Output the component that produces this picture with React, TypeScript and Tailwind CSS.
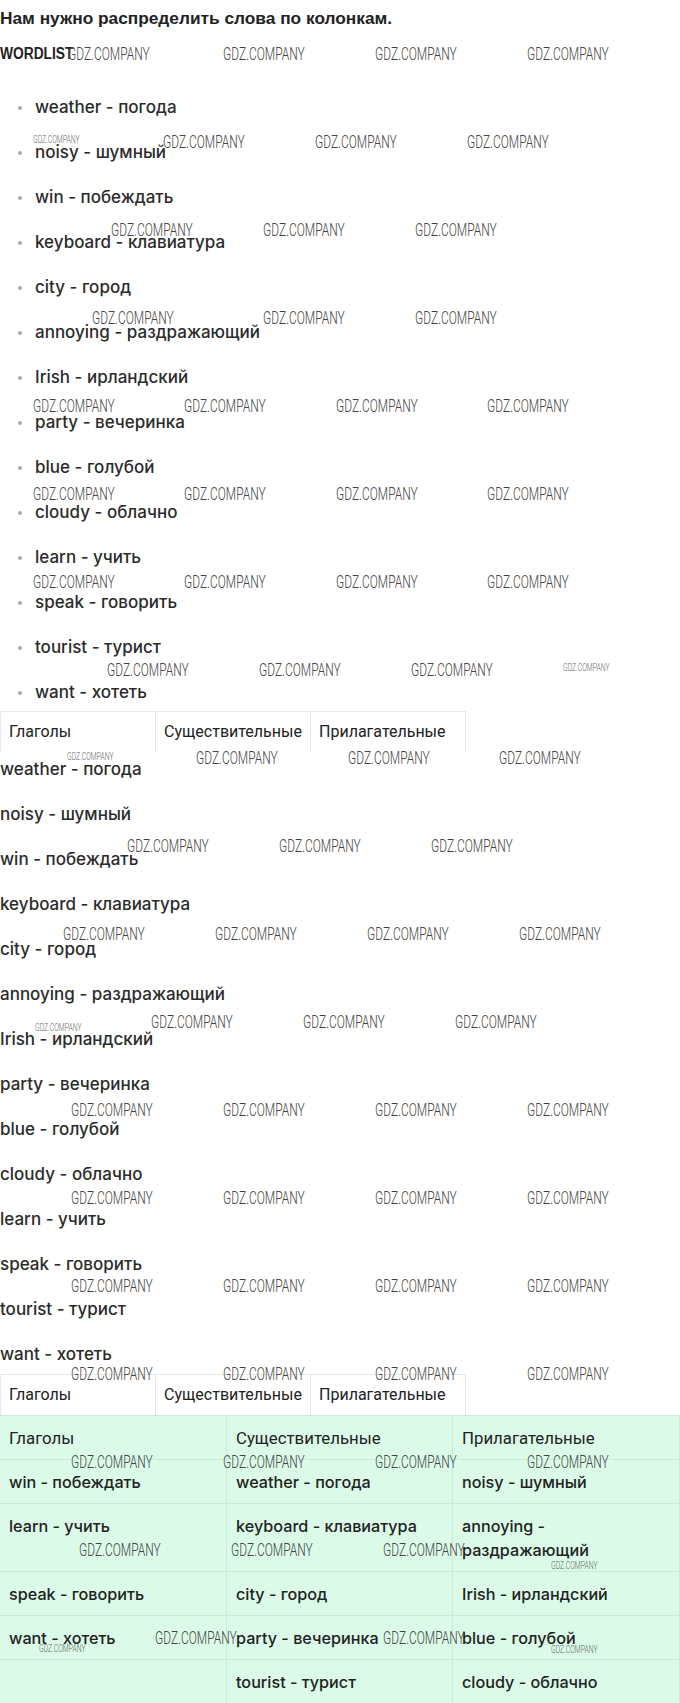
import React from 'react';

const words = [
  'weather - погода',
  'noisy - шумный',
  'win - побеждать',
  'keyboard - клавиатура',
  'city - город',
  'annoying - раздражающий',
  'Irish - ирландский',
  'party - вечеринка',
  'blue - голубой',
  'cloudy - облачно',
  'learn - учить',
  'speak - говорить',
  'tourist - турист',
  'want - хотеть',
];

const heads = ['Глаголы', 'Существительные', 'Прилагательные'];

const rows = [
  ['win - побеждать', 'weather - погода', 'noisy - шумный'],
  ['learn - учить', 'keyboard - клавиатура', 'annoying - раздражающий'],
  ['speak - говорить', 'city - город', 'Irish - ирландский'],
  ['want - хотеть', 'party - вечеринка', 'blue - голубой'],
  ['', 'tourist - турист', 'cloudy - облачно'],
];

// watermark grid: [row centre y, x positions], small ones separately
const markRows: [number, number[]][] = [
  [54, [68, 223, 375, 527]],
  [142, [163, 315, 467]],
  [230, [111, 263, 415]],
  [318, [92, 263, 415]],
  [406, [33, 184, 336, 487]],
  [494, [33, 184, 336, 487]],
  [582, [33, 184, 336, 487]],
  [670, [107, 259, 411]],
  [758, [196, 348, 499]],
  [846, [127, 279, 431]],
  [934, [63, 215, 367, 519]],
  [1022, [151, 303, 455]],
  [1110, [71, 223, 375, 527]],
  [1198, [71, 223, 375, 527]],
  [1286, [71, 223, 375, 527]],
  [1374, [71, 223, 375, 527]],
  [1462, [71, 223, 375, 527]],
  [1550, [79, 231, 383]],
  [1638, [155, 383]],
];

const smallMarks: [number, number][] = [
  [33, 139],
  [563, 667],
  [67, 756],
  [35, 1027],
  [551, 1565],
  [39, 1648],
  [551, 1649],
];

function Mark({ x, y, small }: { x: number; y: number; small?: boolean }) {
  return (
    <span
      className={
        small
          ? 'absolute whitespace-nowrap leading-none font-[Roboto,sans-serif] font-light text-[11px] text-[#666] origin-left scale-x-[0.62] -translate-y-1/2'
          : 'absolute whitespace-nowrap leading-none font-[Roboto,sans-serif] font-light text-[18px] text-[#444] origin-left scale-x-[0.665] -translate-y-1/2'
      }
      style={{ left: x, top: y }}
    >
      GDZ.COMPANY
    </span>
  );
}

function HeadTable() {
  return (
    <div className="flex w-[466px] border-t border-l border-[#e5e7eb] font-[Roboto,sans-serif] text-[16px] text-[#222]">
      {heads.map((h) => (
        <div key={h} className="w-[155px] border-r border-[#e5e7eb] px-[8px] h-[40px] flex items-center">
          {h}
        </div>
      ))}
    </div>
  );
}

export default function App() {
  return (
    <div className="relative w-[680px] h-[1703px] overflow-hidden bg-white text-[#222]">
      <div className="font-['Liberation_Sans',Arial,sans-serif] font-bold text-[17.3px] leading-[37px] text-[#222]">
        Нам нужно распределить слова по колонкам.
      </div>
      <div className="h-[34px] flex items-center">
        <span className="inline-block origin-left scale-x-[0.86] font-['Liberation_Sans',Arial,sans-serif] font-bold text-[16px] text-[#222]">
          WORDLIST
        </span>
      </div>

      <ul className="mt-[23px] flex flex-col gap-[18px] font-[Inter,sans-serif] font-medium text-[17px] text-[#2b2b2b]">
        {words.map((w) => (
          <li key={w} className="flex items-center leading-[27px]">
            <span className="ml-[18px] mr-[13px] w-[4px] h-[4px] rounded-full bg-[#aaa]" />
            {w}
          </li>
        ))}
      </ul>

      <div className="mt-[5px]">
        <HeadTable />
      </div>

      <div className="mt-[4px] flex flex-col gap-[18px] font-[Inter,sans-serif] font-medium text-[17px] text-[#2b2b2b]">
        {words.map((w) => (
          <div key={w} className="leading-[27px]">
            {w}
          </div>
        ))}
      </div>

      <div className="mt-[6px]">
        <HeadTable />
      </div>

      <div className="grid grid-cols-[227px_226px_227px] bg-[#dbfbe8] border-t border-[#c9ecd8]">
        {heads.map((h) => (
          <div key={h} className="border-r border-b border-[#c9ecd8] px-[9px] py-[9.5px] leading-[24px] font-[Roboto,sans-serif] text-[16.8px] text-[#222]">
            {h}
          </div>
        ))}
        {rows.flat().map((c, i) => (
          <div key={i} className="border-r border-b border-[#c9ecd8] px-[9px] py-[9.5px] leading-[24px] font-[Inter,sans-serif] font-medium text-[16.2px] text-[#222]">
            {c}
          </div>
        ))}
      </div>

      {markRows.map(([y, xs]) => xs.map((x) => <Mark key={`${x}-${y}`} x={x} y={y} />))}
      {smallMarks.map(([x, y]) => (
        <Mark key={`s${x}-${y}`} x={x} y={y} small />
      ))}
    </div>
  );
}
